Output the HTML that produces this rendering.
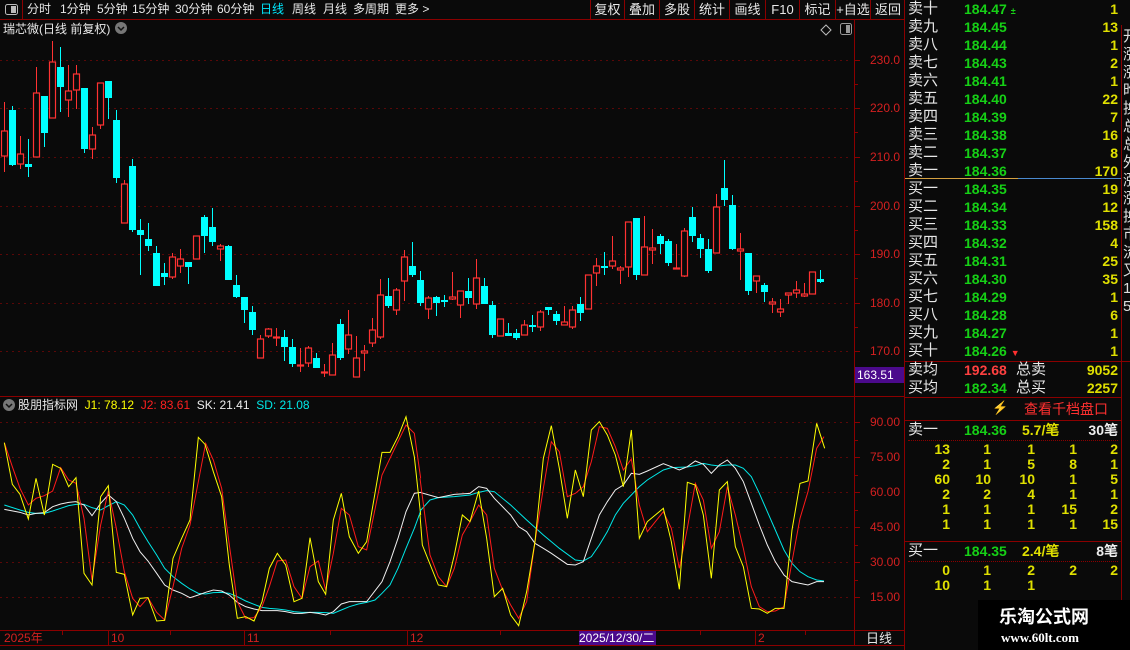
<!DOCTYPE html>
<html><head><meta charset="utf-8"><style>
*{margin:0;padding:0;box-sizing:border-box}
body{width:1130px;height:650px;background:#0a0a0a;overflow:hidden;position:relative;font-family:"Liberation Sans","Noto Sans CJK SC",sans-serif;color:#e8e8e8}
.a{position:absolute;white-space:nowrap}
.tb{font-size:12px;top:1px;line-height:17px}
.rb{position:absolute;top:0;height:19px;border-left:1px solid #8b0000;font-size:13px;line-height:19px;text-align:center;color:#e8e8e8}
.pl{position:absolute;left:852px;width:48px;text-align:right;font-size:12px;color:#d42020;line-height:12px}
.row{position:absolute;left:906px;width:212px;height:18px;font-size:15px;line-height:18px}
.row .n{position:absolute;left:2px;color:#e8e8e8}
.row .p{position:absolute;left:58px;color:#16d016;font-size:14px;font-weight:bold}
.row .v{position:absolute;right:0;color:#e0e000;font-size:14px;font-weight:bold}
.q{position:absolute;left:906px;width:212px;height:15px;font-size:14px;line-height:15px;color:#e0e000;font-weight:bold}
.q span{position:absolute;width:30px;text-align:right}
</style></head><body>
<svg class="a" style="left:0;top:0" width="1130" height="650">
<g stroke="#5a0808" stroke-dasharray="2 4" stroke-width="1">
<path d="M0 60.5H852M0 108.5H852M0 157.5H852M0 206.5H852M0 254.5H852M0 303.5H852M0 351.5H852M0 422.5H852M0 457.5H852M0 492.5H852M0 527.5H852M0 562.5H852M0 597.5H852"/>
</g>
<g stroke="#8b0000" stroke-width="1" fill="none">
<path d="M0 19.5H905M854.5 19V646M904.5 0V650M0 396.5H905M0 630.5H905M0 645.5H905M22.5 0V19"/>
<path d="M855 60.5h5M855 84.5h3M855 108.5h5M855 132.5h3M855 157.5h5M855 181.5h3M855 206.5h5M855 230.5h3M855 254.5h5M855 278.5h3M855 303.5h5M855 327.5h3M855 351.5h5M855 422.5h5M855 440.5h3M855 457.5h5M855 475.5h3M855 492.5h5M855 510.5h3M855 527.5h5M855 545.5h3M855 562.5h5M855 580.5h3M855 597.5h5"/>
<path d="M108.5 631V645M244.5 631V645M407.5 631V645M755.5 631V645M62.5 631v4M170.5 631v4M330.5 631v4M500.5 631v4M700.5 631v4M805.5 631v4"/>
</g>
<path stroke="#ff3232" stroke-width="1" d="M4.5 102V172M20.5 136V169M36.5 67V157M52.5 41V118M68.5 65V117M76.5 65V109M92.5 127V159M100.5 83V129M124.5 180V223M172.5 253V279M180.5 249V273M196.5 236V259M220.5 244V261M260.5 335V358M268.5 328V338M276.5 328V346M300.5 348V372M308.5 346V367M324.5 364V377M332.5 343V375M348.5 310V354M356.5 336V377M364.5 345V371M372.5 318V347M380.5 279V339M396.5 288V315M404.5 250V301M428.5 296V319M452.5 272V300M460.5 291V318M476.5 259V309M500.5 319V336M524.5 320V335M540.5 310V331M564.5 306V325M572.5 306V329M588.5 275V309M596.5 258V286M612.5 236V269M620.5 266V284M628.5 222V277M644.5 216V275M652.5 229V264M676.5 244V269M684.5 228V277M716.5 194V253M740.5 233V280M756.5 276V293M772.5 298V313M780.5 299V317M788.5 293V304M796.5 281V298M804.5 283V297M812.5 272V294"/>
<g fill="#0a0a0a" stroke="#ff3232" stroke-width="1.2">
<rect x="1.5" y="131" width="6" height="25"/><rect x="17.5" y="154" width="6" height="10"/><rect x="33.5" y="93" width="6" height="64"/><rect x="49.5" y="62" width="6" height="56"/><rect x="65.5" y="91" width="6" height="9"/><rect x="73.5" y="74" width="6" height="16"/><rect x="89.5" y="135" width="6" height="14"/><rect x="97.5" y="83" width="6" height="42"/><rect x="121.5" y="184" width="6" height="39"/><rect x="169.5" y="257" width="6" height="20"/><rect x="177.5" y="259" width="6" height="7"/><rect x="193.5" y="236" width="6" height="23"/><rect x="217.5" y="246" width="6" height="3"/><rect x="257.5" y="339" width="6" height="19"/><rect x="265.5" y="329" width="6" height="7"/><rect x="273.5" y="337" width="6" height="1"/><rect x="297.5" y="365" width="6" height="1"/><rect x="305.5" y="348" width="6" height="15"/><rect x="321.5" y="372" width="6" height="1"/><rect x="329.5" y="355" width="6" height="20"/><rect x="345.5" y="335" width="6" height="14"/><rect x="353.5" y="358" width="6" height="19"/><rect x="361.5" y="351" width="6" height="2"/><rect x="369.5" y="330" width="6" height="13"/><rect x="377.5" y="295" width="6" height="42"/><rect x="393.5" y="290" width="6" height="20"/><rect x="401.5" y="257" width="6" height="24"/><rect x="425.5" y="298" width="6" height="11"/><rect x="449.5" y="297" width="6" height="2"/><rect x="457.5" y="291" width="6" height="14"/><rect x="473.5" y="278" width="6" height="26"/><rect x="497.5" y="319" width="6" height="17"/><rect x="521.5" y="325" width="6" height="10"/><rect x="537.5" y="312" width="6" height="15"/><rect x="561.5" y="322" width="6" height="3"/><rect x="569.5" y="310" width="6" height="17"/><rect x="585.5" y="275" width="6" height="34"/><rect x="593.5" y="266" width="6" height="7"/><rect x="609.5" y="261" width="6" height="5"/><rect x="617.5" y="268" width="6" height="2"/><rect x="625.5" y="222" width="6" height="45"/><rect x="641.5" y="247" width="6" height="28"/><rect x="649.5" y="248" width="6" height="2"/><rect x="673.5" y="268" width="6" height="1"/><rect x="681.5" y="231" width="6" height="45"/><rect x="713.5" y="207" width="6" height="46"/><rect x="737.5" y="249" width="6" height="2"/><rect x="753.5" y="276" width="6" height="5"/><rect x="769.5" y="302" width="6" height="2"/><rect x="777.5" y="309" width="6" height="3"/><rect x="785.5" y="293" width="6" height="2"/><rect x="793.5" y="290" width="6" height="3"/><rect x="801.5" y="294" width="6" height="2"/><rect x="809.5" y="272" width="6" height="22"/>
</g>
<path stroke="#00ffff" stroke-width="1" d="M12.5 106V166M28.5 139V177M44.5 96V147M60.5 47V112M84.5 88V153M108.5 81V119M116.5 110V183M132.5 159V232M140.5 219V275M148.5 223V251M156.5 246V286M164.5 263V285M188.5 262V284M204.5 215V253M212.5 208V246M228.5 245V280M236.5 275V298M244.5 297V323M252.5 306V335M284.5 330V361M292.5 339V367M316.5 353V368M340.5 319V360M388.5 278V308M412.5 242V277M420.5 271V306M436.5 296V316M444.5 295V307M468.5 278V304M484.5 278V304M492.5 301V338M508.5 323V336M516.5 329V340M532.5 315V332M548.5 307V315M556.5 311V325M580.5 297V321M604.5 252V275M636.5 218V280M660.5 234V254M668.5 239V266M692.5 207V242M700.5 234V258M708.5 239V273M724.5 160V206M732.5 195V250M748.5 253V295M764.5 283V302M820.5 270V283"/>
<g fill="#00ffff">
<rect x="9" y="110" width="7" height="55"/><rect x="25" y="164" width="7" height="3"/><rect x="41" y="96" width="7" height="37"/><rect x="57" y="67" width="7" height="20"/><rect x="81" y="88" width="7" height="61"/><rect x="105" y="81" width="7" height="17"/><rect x="113" y="120" width="7" height="58"/><rect x="129" y="166" width="7" height="64"/><rect x="137" y="230" width="7" height="5"/><rect x="145" y="239" width="7" height="7"/><rect x="153" y="253" width="7" height="33"/><rect x="161" y="273" width="7" height="4"/><rect x="185" y="262" width="7" height="5"/><rect x="201" y="217" width="7" height="19"/><rect x="209" y="227" width="7" height="15"/><rect x="225" y="246" width="7" height="34"/><rect x="233" y="285" width="7" height="12"/><rect x="241" y="297" width="7" height="13"/><rect x="249" y="312" width="7" height="18"/><rect x="281" y="337" width="7" height="10"/><rect x="289" y="347" width="7" height="17"/><rect x="313" y="358" width="7" height="10"/><rect x="337" y="324" width="7" height="34"/><rect x="385" y="296" width="7" height="10"/><rect x="409" y="266" width="7" height="9"/><rect x="417" y="280" width="7" height="23"/><rect x="433" y="297" width="7" height="6"/><rect x="441" y="300" width="7" height="2"/><rect x="465" y="291" width="7" height="7"/><rect x="481" y="286" width="7" height="18"/><rect x="489" y="305" width="7" height="30"/><rect x="505" y="333" width="7" height="3"/><rect x="513" y="333" width="7" height="5"/><rect x="529" y="325" width="7" height="2"/><rect x="545" y="307" width="7" height="3"/><rect x="553" y="314" width="7" height="7"/><rect x="577" y="304" width="7" height="9"/><rect x="601" y="266" width="7" height="2"/><rect x="633" y="218" width="7" height="57"/><rect x="657" y="236" width="7" height="8"/><rect x="665" y="241" width="7" height="22"/><rect x="689" y="217" width="7" height="19"/><rect x="697" y="238" width="7" height="11"/><rect x="705" y="249" width="7" height="22"/><rect x="721" y="188" width="7" height="12"/><rect x="729" y="205" width="7" height="44"/><rect x="745" y="253" width="7" height="38"/><rect x="761" y="285" width="7" height="7"/><rect x="817" y="279" width="7" height="3"/>
</g>
<g fill="none" stroke-width="3" transform="translate(0,405) scale(0.33333)">
<polyline stroke="#00e8e8" points="13,300 60,315 85,322 108,325 133,325 158,318 182,310 206,302 228,298 252,298 276,308 302,315 325,302 349,290 373,300 398,330 420,370 444,410 470,450 494,490 519,515 545,535 570,552 595,565 617,567 640,563 665,562 688,565 712,575 737,588 762,598 786,607 808,610 832,612 857,615 882,620 906,622 930,622 955,622 977,623 1000,625 1024,615 1048,605 1075,597 1100,592 1125,585 1146,565 1170,540 1194,490 1218,430 1243,370 1262,318"/>
<polyline stroke="#f0f0f0" points="13,313 60,322 85,330 108,325 133,323 158,305 182,297 206,292 228,290 252,300 276,332 302,295 325,270 349,290 373,340 398,400 420,440 444,468 470,505 494,540 519,555 545,565 570,578 595,570 617,562 640,555 665,558 688,570 712,592 737,605 762,612 786,617 808,617 832,617 857,620 882,625 906,625 930,622 955,625 977,630 1000,620 1024,597 1048,590 1075,590 1100,590 1146,530 1170,470 1194,400 1218,320 1243,265 1262,262"/>
<polyline stroke="#ff1a1a" points="13,113 37,185 60,250 85,300 108,280 133,272 158,258 182,188 206,225 228,235 252,340 276,525 302,360 325,258 349,370 373,500 398,580 420,605 444,578 470,622 494,645 519,545 545,430 570,360 595,230 617,115 640,165 665,250 688,420 712,590 737,640 762,638 786,605 808,545 832,468 857,465 882,545 906,580 930,485 955,468 977,555 1000,445 1024,310 1048,330 1075,425 1100,435 1146,210 1170,160 1194,110 1218,60 1243,85 1262,220"/>
<polyline stroke="#ffff00" points="13,113 37,238 60,268 85,342 108,220 133,330 158,178 182,190 206,245 228,218 252,505 276,540 302,275 325,242 349,502 373,508 398,630 420,580 444,578 470,648 494,646 519,460 545,400 570,345 595,97 615,118 640,200 665,275 688,480 712,640 737,635 762,648 786,590 808,490 832,445 857,480 882,590 906,580 930,398 955,530 977,568 1000,345 1024,265 1048,395 1075,445 1100,410 1146,142 1170,142 1194,95 1218,35 1243,155 1262,330"/>
</g>
<g fill="none" stroke-width="3" transform="translate(420,405) scale(0.33333)">
<polyline stroke="#00e8e8" points="0,318 30,285 55,278 103,275 150,270 176,262 200,257 223,260 272,300 320,345 370,390 418,430 466,465 490,468 514,455 538,420 562,380 586,330 610,295 634,270 658,245 682,225 730,195 754,188 802,186 826,182 850,175 874,180 898,183 922,180 946,180 970,190 994,215 1018,265 1042,320 1066,375 1092,435 1116,475 1140,500 1164,515 1190,525 1212,528"/>
<polyline stroke="#f0f0f0" points="0,262 55,278 103,268 150,265 176,245 200,250 223,280 272,330 296,365 320,380 345,415 370,430 394,445 442,478 466,480 490,470 514,400 538,330 562,290 586,255 610,240 634,205 658,208 682,198 730,176 754,185 778,195 802,185 826,168 850,178 874,205 898,180 922,165 946,190 970,230 994,295 1018,360 1042,420 1066,470 1092,510 1116,530 1140,535 1164,540 1190,530 1212,530"/>
<polyline stroke="#ff1a1a" points="0,220 30,450 55,515 80,545 103,490 127,390 150,350 176,300 200,330 223,490 248,555 272,600 296,640 320,590 345,410 370,250 394,110 418,140 442,275 466,265 490,245 514,170 538,65 562,70 586,125 610,195 634,162 658,300 682,380 730,320 754,370 778,490 802,370 826,235 850,285 874,430 898,380 922,245 946,330 970,430 994,545 1018,605 1042,620 1066,618 1092,605 1116,470 1140,340 1164,260 1190,130 1212,95"/>
<polyline stroke="#ffff00" points="0,330 7,420 55,540 80,545 103,450 127,330 150,350 176,258 200,400 223,575 248,550 272,630 296,662 320,560 345,410 370,160 394,62 418,190 442,340 466,195 490,275 514,75 538,50 562,90 586,150 610,245 634,75 658,400 682,350 730,310 754,410 778,553 802,232 826,240 850,330 874,520 898,255 922,230 946,425 970,485 994,610 1018,612 1042,625 1066,610 1092,610 1116,375 1140,235 1164,228 1190,55 1214,130"/>
</g>
<rect x="5.5" y="4.5" width="12" height="10" rx="2" fill="none" stroke="#bbb"/><rect x="11" y="6" width="5" height="7" fill="#bbb"/>
<circle cx="121" cy="28" r="6" fill="#777"/><path d="M118 27l3 3 3-3" stroke="#111" stroke-width="1.5" fill="none"/>
<circle cx="9" cy="405" r="6" fill="#777"/><path d="M6 404l3 3 3-3" stroke="#111" stroke-width="1.5" fill="none"/>
<path d="M826 25l5 5-5 5-5-5z" fill="none" stroke="#bbb"/>
<rect x="840.5" y="23.5" width="11" height="11" rx="2" fill="none" stroke="#999"/><rect x="846" y="25" width="4" height="8" fill="#999"/>
</svg>

<div class="a tb" style="left:27px">分时</div>
<div class="a tb" style="left:60px">1分钟</div>
<div class="a tb" style="left:97px">5分钟</div>
<div class="a tb" style="left:132px">15分钟</div>
<div class="a tb" style="left:175px">30分钟</div>
<div class="a tb" style="left:217px">60分钟</div>
<div class="a tb" style="left:260px;color:#00e8ff">日线</div>
<div class="a tb" style="left:292px">周线</div>
<div class="a tb" style="left:323px">月线</div>
<div class="a tb" style="left:353px">多周期</div>
<div class="a tb" style="left:395px">更多 &gt;</div>
<div class="rb" style="left:590px;width:34px">复权</div>
<div class="rb" style="left:624px;width:35px">叠加</div>
<div class="rb" style="left:659px;width:35px">多股</div>
<div class="rb" style="left:694px;width:35px">统计</div>
<div class="rb" style="left:729px;width:36px">画线</div>
<div class="rb" style="left:765px;width:34px">F10</div>
<div class="rb" style="left:799px;width:36px">标记</div>
<div class="rb" style="left:835px;width:35px">+自选</div>
<div class="rb" style="left:870px;width:35px">返回</div>
<div class="a" style="left:3px;top:21px;font-size:12px;line-height:16px">瑞芯微(日线 前复权)</div>

<div class="pl" style="top:54px">230.0</div>
<div class="pl" style="top:102px">220.0</div>
<div class="pl" style="top:151px">210.0</div>
<div class="pl" style="top:200px">200.0</div>
<div class="pl" style="top:248px">190.0</div>
<div class="pl" style="top:297px">180.0</div>
<div class="pl" style="top:345px">170.0</div>
<div class="a" style="left:855px;top:367px;width:49px;height:16px;background:#4b0a8c;color:#fff;font-size:12px;line-height:16px;padding-left:2px">163.51</div>
<div class="pl" style="top:416px">90.00</div>
<div class="pl" style="top:451px">75.00</div>
<div class="pl" style="top:486px">60.00</div>
<div class="pl" style="top:521px">45.00</div>
<div class="pl" style="top:556px">30.00</div>
<div class="pl" style="top:591px">15.00</div>

<div class="a" style="left:18px;top:398px;font-size:12px;line-height:14px">股朋指标网 <span style="color:#ffff00">&nbsp;J1: 78.12</span> <span style="color:#ff2020">&nbsp;J2: 83.61</span> <span style="color:#eee">&nbsp;SK: 21.41</span> <span style="color:#00e8e8">&nbsp;SD: 21.08</span></div>

<div class="a" style="left:4px;top:631px;font-size:12px;line-height:14px;color:#d42020">2025年</div>
<div class="a" style="left:111px;top:631px;font-size:12px;line-height:14px;color:#d42020">10</div>
<div class="a" style="left:247px;top:631px;font-size:12px;line-height:14px;color:#d42020">11</div>
<div class="a" style="left:410px;top:631px;font-size:12px;line-height:14px;color:#d42020">12</div>
<div class="a" style="left:758px;top:631px;font-size:12px;line-height:14px;color:#d42020">2</div>
<div class="a" style="left:579px;top:631px;width:77px;height:14px;background:#4b0a8c;color:#fff;font-size:12px;line-height:14px">2025/12/30/二</div>
<div class="a" style="left:866px;top:631px;font-size:13px;line-height:15px">日线</div>

<div class="a" style="left:905px;top:178px;width:113px;height:1px;background:#d4a040"></div>
<div class="a" style="left:1018px;top:178px;width:103px;height:1px;background:#4a8ad0"></div>
<div class="a" style="left:1121px;top:25px;width:1px;height:625px;background:#8b0000"></div>
<div class="a" style="left:905px;top:361px;width:225px;height:1px;background:#8b0000"></div>
<div class="a" style="left:905px;top:397px;width:216px;height:1px;background:#8b0000"></div>
<div class="a" style="left:905px;top:420px;width:216px;height:1px;background:#8b0000"></div>
<div class="a" style="left:908px;top:440px;width:210px;border-top:1px dotted #8b0000"></div>
<div class="a" style="left:905px;top:541px;width:216px;height:1px;background:#8b0000"></div>
<div class="a" style="left:908px;top:561px;width:210px;border-top:1px dotted #8b0000"></div>

<div class="row" style="top:0"><span class="n">卖十</span><span class="p">184.47 <span style="font-size:9px">±</span></span><span class="v">1</span></div>
<div class="row" style="top:18px"><span class="n">卖九</span><span class="p">184.45</span><span class="v">13</span></div>
<div class="row" style="top:36px"><span class="n">卖八</span><span class="p">184.44</span><span class="v">1</span></div>
<div class="row" style="top:54px"><span class="n">卖七</span><span class="p">184.43</span><span class="v">2</span></div>
<div class="row" style="top:72px"><span class="n">卖六</span><span class="p">184.41</span><span class="v">1</span></div>
<div class="row" style="top:90px"><span class="n">卖五</span><span class="p">184.40</span><span class="v">22</span></div>
<div class="row" style="top:108px"><span class="n">卖四</span><span class="p">184.39</span><span class="v">7</span></div>
<div class="row" style="top:126px"><span class="n">卖三</span><span class="p">184.38</span><span class="v">16</span></div>
<div class="row" style="top:144px"><span class="n">卖二</span><span class="p">184.37</span><span class="v">8</span></div>
<div class="row" style="top:162px"><span class="n">卖一</span><span class="p">184.36</span><span class="v">170</span></div>
<div class="row" style="top:180px"><span class="n">买一</span><span class="p">184.35</span><span class="v">19</span></div>
<div class="row" style="top:198px"><span class="n">买二</span><span class="p">184.34</span><span class="v">12</span></div>
<div class="row" style="top:216px"><span class="n">买三</span><span class="p">184.33</span><span class="v">158</span></div>
<div class="row" style="top:234px"><span class="n">买四</span><span class="p">184.32</span><span class="v">4</span></div>
<div class="row" style="top:252px"><span class="n">买五</span><span class="p">184.31</span><span class="v">25</span></div>
<div class="row" style="top:270px"><span class="n">买六</span><span class="p">184.30</span><span class="v">35</span></div>
<div class="row" style="top:288px"><span class="n">买七</span><span class="p">184.29</span><span class="v">1</span></div>
<div class="row" style="top:306px"><span class="n">买八</span><span class="p">184.28</span><span class="v">6</span></div>
<div class="row" style="top:324px"><span class="n">买九</span><span class="p">184.27</span><span class="v">1</span></div>
<div class="row" style="top:342px"><span class="n">买十</span><span class="p">184.26 <span style="color:#ff3030;font-size:9px">▼</span></span><span class="v">1</span></div>
<div class="row" style="top:361px"><span class="n">卖均</span><span class="p" style="color:#ff4040">192.68</span><span class="n" style="left:110px">总卖</span><span class="v">9052</span></div>
<div class="row" style="top:379px"><span class="n">买均</span><span class="p">182.34</span><span class="n" style="left:110px">总买</span><span class="v">2257</span></div>
<div class="a" style="left:992px;top:400px;color:#8a7020;font-size:13px">⚡</div>
<div class="a" style="left:1024px;top:400px;color:#ff3030;font-size:14px;line-height:18px">查看千档盘口</div>
<div class="row" style="top:421px"><span class="n">卖一</span><span class="p">184.36</span><span class="n" style="left:116px;color:#e0e000;font-size:14px;font-weight:bold">5.7/笔</span><span class="v" style="color:#eee">30笔</span></div>
<div class="q" style="top:442px"><span style="left:14px">13</span><span style="left:55px">1</span><span style="left:99px">1</span><span style="left:141px">1</span><span style="left:182px">2</span></div>
<div class="q" style="top:457px"><span style="left:14px">2</span><span style="left:55px">1</span><span style="left:99px">5</span><span style="left:141px">8</span><span style="left:182px">1</span></div>
<div class="q" style="top:472px"><span style="left:14px">60</span><span style="left:55px">10</span><span style="left:99px">10</span><span style="left:141px">1</span><span style="left:182px">5</span></div>
<div class="q" style="top:487px"><span style="left:14px">2</span><span style="left:55px">2</span><span style="left:99px">4</span><span style="left:141px">1</span><span style="left:182px">1</span></div>
<div class="q" style="top:502px"><span style="left:14px">1</span><span style="left:55px">1</span><span style="left:99px">1</span><span style="left:141px">15</span><span style="left:182px">2</span></div>
<div class="q" style="top:517px"><span style="left:14px">1</span><span style="left:55px">1</span><span style="left:99px">1</span><span style="left:141px">1</span><span style="left:182px">15</span></div>
<div class="row" style="top:542px"><span class="n">买一</span><span class="p">184.35</span><span class="n" style="left:116px;color:#e0e000;font-size:14px;font-weight:bold">2.4/笔</span><span class="v" style="color:#eee">8笔</span></div>
<div class="q" style="top:563px"><span style="left:14px">0</span><span style="left:55px">1</span><span style="left:99px">2</span><span style="left:141px">2</span><span style="left:182px">2</span></div>
<div class="q" style="top:578px"><span style="left:14px">10</span><span style="left:55px">1</span><span style="left:99px">1</span></div>
<div class="a" style="left:1123px;top:28px;font-size:15px;line-height:18px;color:#ddd;width:7px;overflow:hidden">开<br>涨<br>涨<br>昨<br>换<br>总<br>总<br>外<br>涨<br>涨<br>换<br>市<br>流<br>又<br>1<br>5</div>
<div class="a" style="left:978px;top:600px;width:152px;height:50px;background:#000"></div>
<div class="a" style="left:999px;top:606px;font-size:18px;font-weight:bold;color:#fff;line-height:22px">乐淘公式网</div>
<div class="a" style="left:1001px;top:630px;font-family:'Liberation Serif',serif;font-size:13px;font-weight:bold;color:#fff">www.60lt.com</div>
</body></html>
